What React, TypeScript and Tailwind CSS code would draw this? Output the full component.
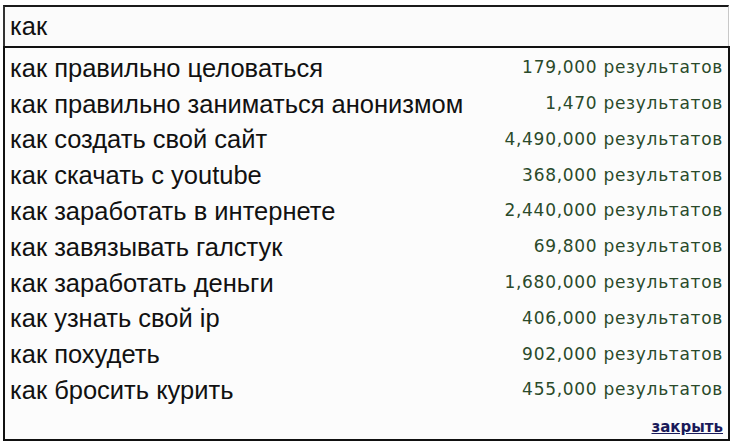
const rows: [string, string][] = [
  ["как правильно целоваться", "179,000"],
  ["как правильно заниматься анонизмом", "1,470"],
  ["как создать свой сайт", "4,490,000"],
  ["как скачать с youtube", "368,000"],
  ["как заработать в интернете", "2,440,000"],
  ["как завязывать галстук", "69,800"],
  ["как заработать деньги", "1,680,000"],
  ["как узнать свой ip", "406,000"],
  ["как похудеть", "902,000"],
  ["как бросить курить", "455,000"],
];

export default function App() {
  return (
    <div className="w-[734px] h-[444px] bg-white overflow-hidden pt-[5px] font-['Liberation_Sans',Arial,sans-serif]">
      <div className="ml-[3px] w-[726px] h-[41px] border-t-2 border-l-2 border-r border-t-[#1a1a1a] border-l-[#333] border-r-[#c8c8c8] bg-[#fbfbfb] flex items-center pl-[5px] text-[25.5px] text-[#111]">
        как
      </div>
      <div className="ml-[3px] w-[727px] h-[395px] border-2 border-[#111] bg-[#fcfcfc] pt-[2px] px-[5px] flex flex-col">
        {rows.map(([q, n]) => (
          <div key={q} className="h-[35.8px] flex items-center justify-between">
            <span className="text-[25.5px] text-[#111]">{q}</span>
            <span className="text-[17px] tracking-[0.7px] text-[#2a4a2a] font-['DejaVu_Sans',Verdana,sans-serif]">
              {n} результатов
            </span>
          </div>
        ))}
        <div className="flex justify-end mt-[8px]">
          <a className="text-[15px] font-bold text-[#1a1a5a] underline font-['DejaVu_Sans',Verdana,sans-serif]">
            закрыть
          </a>
        </div>
      </div>
    </div>
  );
}
